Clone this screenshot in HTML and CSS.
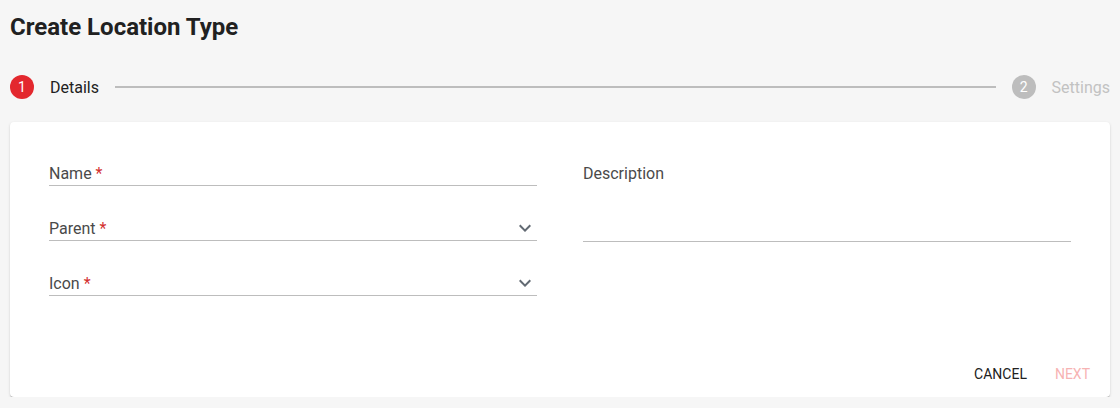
FILE: index.html
```html
<!DOCTYPE html>
<html lang="en">
  <head>
    <meta charset="UTF-8" />
    <meta name="viewport" content="width=device-width, initial-scale=1.0" />
    <title>Create Location Type</title>
    <link rel="stylesheet" href="styles.css">
  </head>
  <body>
    <div class="page">
      <h1 class="page-title">Create Location Type</h1>

      <div class="stepper">
        <div class="step active">
          <span class="step-num">1</span>
          <span class="step-label">Details</span>
        </div>
        <div class="step-line"></div>
        <div class="step">
          <span class="step-num">2</span>
          <span class="step-label">Settings</span>
        </div>
      </div>

      <div class="card">
        <div class="form-grid">
          <div class="col">
            <div class="field">
              <span class="field-label">Name <span class="req">*</span></span>
            </div>
            <div class="field select">
              <span class="field-label">Parent <span class="req">*</span></span>
              <svg class="chevron" viewBox="0 0 24 24" width="24" height="24"><path d="M16.59 8.59L12 13.17 7.41 8.59 6 10l6 6 6-6z"/></svg>
            </div>
            <div class="field select">
              <span class="field-label">Icon <span class="req">*</span></span>
              <svg class="chevron" viewBox="0 0 24 24" width="24" height="24"><path d="M16.59 8.59L12 13.17 7.41 8.59 6 10l6 6 6-6z"/></svg>
            </div>
          </div>
          <div class="col">
            <div class="field textarea">
              <span class="field-label">Description</span>
            </div>
          </div>
        </div>

        <div class="actions">
          <button class="btn">Cancel</button>
          <button class="btn btn-next" disabled>Next</button>
        </div>
      </div>
    </div>
  </body>
</html>
```

FILE: styles.css
```css
body {
  margin: 0;
  background: #f6f6f6;
  font-family: Roboto, "Liberation Sans", sans-serif;
  color: #212121;
}

.page {
  padding: 0 10px;
}

.page-title {
  margin: 13px 0 0;
  font-size: 24px;
  line-height: 28px;
  font-weight: 700;
}

/* stepper */
.stepper {
  display: flex;
  align-items: center;
  margin-top: 34px;
  height: 24px;
}

.step {
  display: flex;
  align-items: center;
  gap: 16px;
}

.step-num {
  width: 24px;
  height: 24px;
  border-radius: 50%;
  background: #bdbdbd;
  color: #fff;
  font-size: 14px;
  display: flex;
  align-items: center;
  justify-content: center;
}

.step-label {
  font-size: 16px;
  color: #c2c2c2;
}

.step.active .step-num {
  background: #e3282e;
}

.step.active .step-label {
  color: #212121;
}

.step-line {
  flex: 1;
  height: 2px;
  background: #bdbdbd;
  margin: 0 16px;
}

/* card */
.card {
  margin-top: 23px;
  background: #fff;
  border-radius: 4px;
  box-shadow: 0 2px 1px -1px rgba(0, 0, 0, 0.2), 0 1px 1px 0 rgba(0, 0, 0, 0.14), 0 1px 3px 0 rgba(0, 0, 0, 0.12);
  padding: 39px 39px 5px;
}

.form-grid {
  display: grid;
  grid-template-columns: 1fr 1fr;
  column-gap: 46px;
}

.col {
  display: flex;
  flex-direction: column;
  gap: 30px;
}

.field {
  height: 24px;
  border-bottom: 1px solid #bdbdbd;
  display: flex;
  align-items: flex-start;
  justify-content: space-between;
}

.field.textarea {
  height: 80px;
}

.field-label {
  padding-top: 3px;
  font-size: 16px;
  line-height: 20px;
  color: #4a4a4a;
}

.req {
  color: #d32f2f;
}

.chevron {
  fill: #626a73;
}

.actions {
  display: flex;
  justify-content: flex-end;
  gap: 2px;
  margin-top: 60px;
  margin-right: -32px;
}

.btn {
  font-family: inherit;
  font-size: 14px;
  font-weight: 400;
  text-transform: uppercase;
  background: none;
  border: none;
  height: 36px;
  padding: 0 13px;
  color: #212121;
  cursor: pointer;
}

.btn-next {
  color: #f7b3b3;
  cursor: default;
}
```
